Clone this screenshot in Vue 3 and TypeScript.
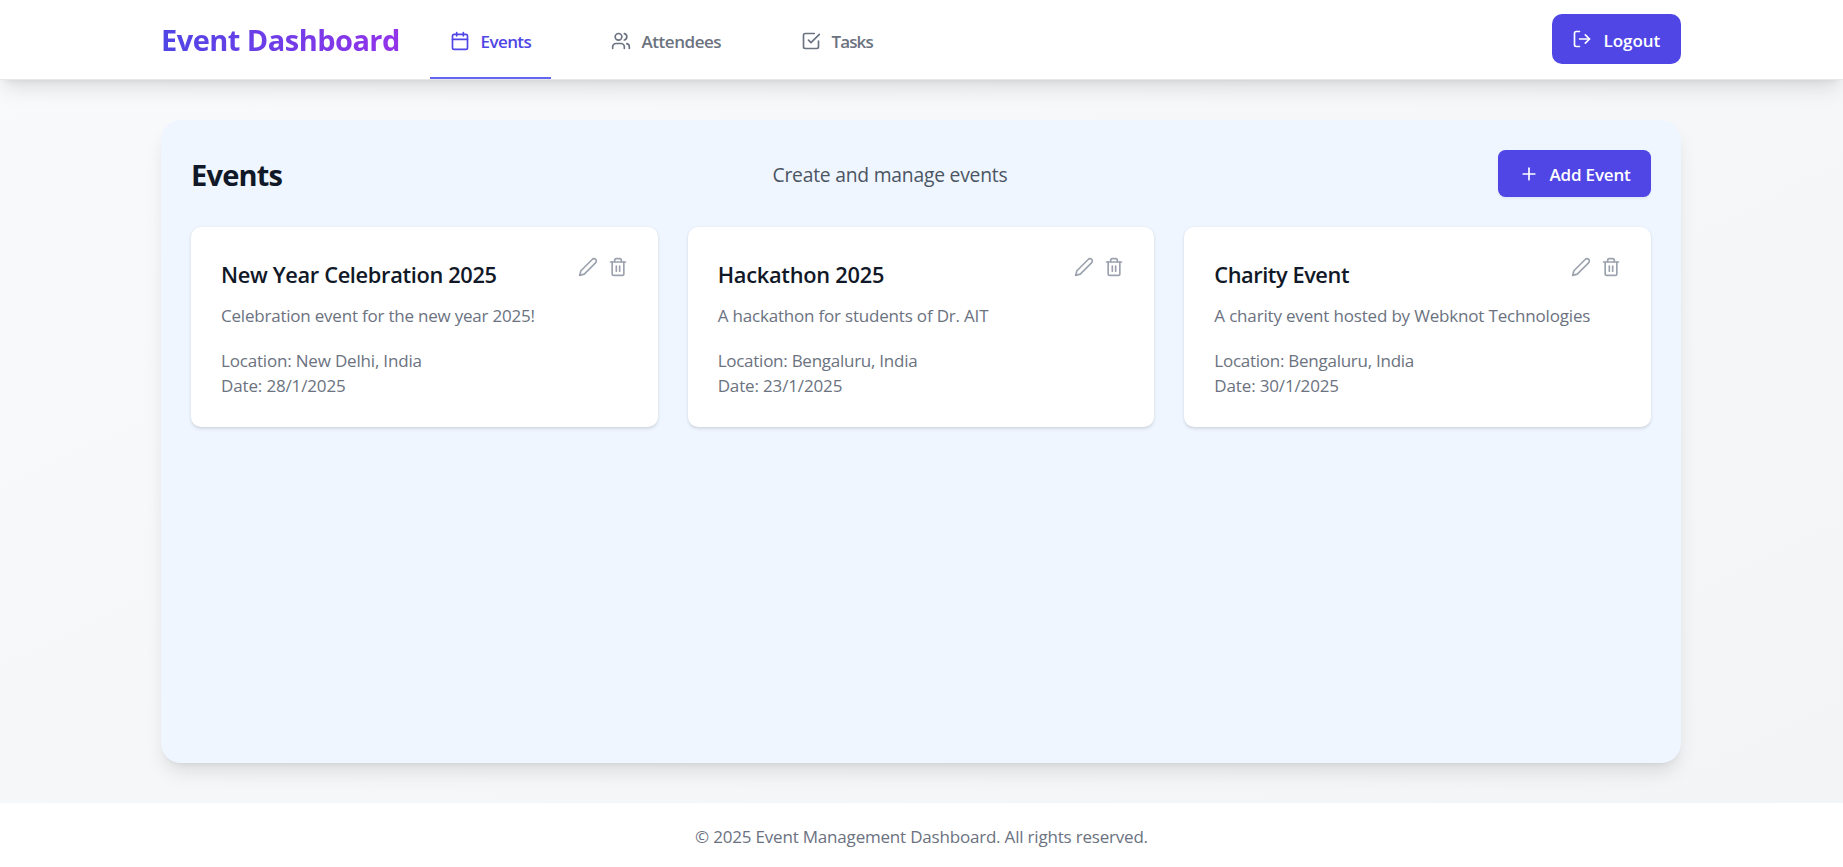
<script setup lang="ts">
type IconName = 'calendar' | 'users' | 'check' | 'logout' | 'plus' | 'pencil' | 'trash'

const icons: Record<IconName, string[]> = {
  calendar: ['M8 2v4', 'M16 2v4', 'M5 4h14a2 2 0 0 1 2 2v14a2 2 0 0 1-2 2H5a2 2 0 0 1-2-2V6a2 2 0 0 1 2-2z', 'M3 10h18'],
  users: ['M16 21v-2a4 4 0 0 0-4-4H6a4 4 0 0 0-4 4v2', 'M5 7a4 4 0 1 0 8 0a4 4 0 1 0-8 0', 'M22 21v-2a4 4 0 0 0-3-3.87', 'M16 3.13a4 4 0 0 1 0 7.75'],
  check: ['m9 11 3 3L22 4', 'M21 12v7a2 2 0 0 1-2 2H5a2 2 0 0 1-2-2V5a2 2 0 0 1 2-2h11'],
  logout: ['M9 21H5a2 2 0 0 1-2-2V5a2 2 0 0 1 2-2h4', 'm16 17 5-5-5-5', 'M21 12H9'],
  plus: ['M5 12h14', 'M12 5v14'],
  pencil: ['M17 3a2.85 2.83 0 1 1 4 4L7.5 20.5 2 22l1.5-5.5Z'],
  trash: ['M3 6h18', 'M19 6v14c0 1-1 2-2 2H7c-1 0-2-1-2-2V6', 'M8 6V4c0-1 1-2 2-2h4c1 0 2 1 2 2v2', 'M10 11v6', 'M14 11v6'],
}

interface Tab { label: string; icon: IconName; key: string }
const tabs: Tab[] = [
  { label: 'Events', icon: 'calendar', key: 'tab-events' },
  { label: 'Attendees', icon: 'users', key: 'tab-attendees' },
  { label: 'Tasks', icon: 'check', key: 'tab-tasks' },
]

interface EventItem { key: string; title: string; description: string; location: string; date: string }
const events: EventItem[] = [
  { key: 'celebration', title: 'New Year Celebration 2025', description: 'Celebration event for the new year 2025!', location: 'New Delhi, India', date: '28/1/2025' },
  { key: 'hackathon', title: 'Hackathon 2025', description: 'A hackathon for students of Dr. AIT', location: 'Bengaluru, India', date: '23/1/2025' },
  { key: 'charity', title: 'Charity Event', description: 'A charity event hosted by Webknot Technologies', location: 'Bengaluru, India', date: '30/1/2025' },
]
</script>

<template>
  <div class="page">
    <header class="header">
      <div class="container bar">
        <div class="brand">Event Dashboard</div>
        <nav class="tabs">
          <a v-for="(tab, i) in tabs" :key="tab.key" class="tab" :class="[tab.key, { active: i === 0 }]">
            <svg class="icon" viewBox="0 0 24 24"><path v-for="d in icons[tab.icon]" :key="d" :d="d" /></svg>
            <span>{{ tab.label }}</span>
          </a>
        </nav>
        <button class="btn logout" type="button">
          <svg class="icon" viewBox="0 0 24 24"><path v-for="d in icons.logout" :key="d" :d="d" /></svg>
          <span>Logout</span>
        </button>
      </div>
    </header>

    <main class="container main">
      <section class="panel">
        <div class="panel-head">
          <h1>Events</h1>
          <p class="subtitle">Create and manage events</p>
          <button class="btn add" type="button">
            <svg class="icon" viewBox="0 0 24 24"><path v-for="d in icons.plus" :key="d" :d="d" /></svg>
            <span>Add Event</span>
          </button>
        </div>
        <div class="cards">
          <article v-for="event in events" :key="event.key" class="card" :class="event.key">
            <div class="card-top">
              <h2>{{ event.title }}</h2>
              <div class="actions">
                <svg class="icon" viewBox="0 0 24 24"><path v-for="d in icons.pencil" :key="d" :d="d" /></svg>
                <svg class="icon" viewBox="0 0 24 24"><path v-for="d in icons.trash" :key="d" :d="d" /></svg>
              </div>
            </div>
            <p class="description">{{ event.description }}</p>
            <div class="meta">
              <p class="location">Location: {{ event.location }}</p>
              <p class="date">Date: {{ event.date }}</p>
            </div>
          </article>
        </div>
      </section>
    </main>

    <footer class="footer">© 2025 Event Management Dashboard. All rights reserved.</footer>
  </div>
</template>

<style>
body { margin: 0; }
</style>

<style scoped>
* { box-sizing: border-box; }
h1, h2, p { margin: 0; }

.page {
  display: flex;
  flex-direction: column;
  height: 867px;
  overflow: hidden;
  background: linear-gradient(to bottom right, #f9fafb, #f3f4f6);
  color: #111827;
  font: 400 17px/25px "Open Sans", "Noto Sans", sans-serif;
}
.container { width: 1520px; margin: 0 162px 0 161px; }
.icon {
  flex: none;
  width: 20px;
  height: 20px;
  fill: none;
  stroke: currentColor;
  stroke-width: 2;
  stroke-linecap: round;
  stroke-linejoin: round;
}

.header {
  flex: none;
  height: 80px;
  background: #fff;
  border-bottom: 1px solid #e5e7eb;
  box-shadow: 0 12.5px 18.75px -3.75px rgba(0, 0, 0, 0.1), 0 5px 7.5px -5px rgba(0, 0, 0, 0.1);
}
.bar { display: flex; height: 79px; }
.brand {
  width: 239px;
  padding-top: 20px;
  background: linear-gradient(to right, #4f46e5, #9333ea);
  -webkit-background-clip: text;
  background-clip: text;
  color: transparent;
  font-size: 29px;
  font-weight: 700;
  line-height: 40px;
  letter-spacing: -0.536px;
  white-space: nowrap;
}
.tabs { display: flex; gap: 40px; margin-left: 30px; }
.tab {
  display: flex;
  align-items: center;
  gap: 10.5px;
  padding: 5px 20px 0;
  border-bottom: 2px solid transparent;
  color: #6b7280;
  font-weight: 600;
}
.tab.active { border-bottom-color: #6366f1; color: #4f46e5; }
.tab-events { width: 121px; letter-spacing: -0.577px; }
.tab-attendees { width: 150px; letter-spacing: -0.45px; }
.tab-tasks { letter-spacing: -0.9px; }

.btn {
  display: flex;
  align-items: center;
  gap: 10px;
  padding: 0 0 0 20px;
  border: 0;
  background: #4f46e5;
  color: #fff;
  font: inherit;
  font-weight: 600;
  white-space: nowrap;
}
.logout { gap: 11.5px; width: 129px; height: 50px; margin: 14px 0 0 auto; border-radius: 10px; letter-spacing: -0.042px; }
.logout span { padding-top: 3px; }
.add {
  gap: 11px;
  width: 153px;
  height: 47px;
  padding-left: 20.5px;
  border-radius: 7.5px;
  box-shadow: 0 1.25px 2.5px rgba(0, 0, 0, 0.05);
  letter-spacing: -0.186px;
}
.add span { padding-top: 2px; }

.main { flex: 1; padding: 40px 0; }
.panel {
  height: 643px;
  padding: 30px;
  border-radius: 20px;
  background: #eff6ff;
  box-shadow: 0 12.5px 18.75px -3.75px rgba(0, 0, 0, 0.1), 0 5px 7.5px -5px rgba(0, 0, 0, 0.1);
}
.panel-head { display: flex; align-items: center; justify-content: space-between; height: 47px; }
h1 { width: 92px; padding-top: 2px; font-size: 29px; line-height: 40px; letter-spacing: -0.8px; }
.subtitle { width: 236px; padding-top: 2px; color: #4b5563; font-size: 19.3px; line-height: 30px; letter-spacing: -0.218px; white-space: nowrap; }

.cards { display: grid; grid-template-columns: repeat(3, 1fr); gap: 30px; margin-top: 30px; }
.card {
  height: 200px;
  padding: 30px;
  border-radius: 10px;
  background: #fff;
  box-shadow: 0 1.25px 3.75px rgba(0, 0, 0, 0.1), 0 1.25px 2.5px -1.25px rgba(0, 0, 0, 0.1);
  color: #6b7280;
}
.card-top { display: flex; justify-content: space-between; }
h2 { color: #111827; font-size: 21.8px; font-weight: 600; line-height: 35px; letter-spacing: -0.34px; }
.actions { display: flex; gap: 10px; color: #9ca3af; }
.description { margin-top: 11px; letter-spacing: -0.19px; white-space: nowrap; }
.meta { margin-top: 20px; }
.location { letter-spacing: -0.259px; }
.date { letter-spacing: -0.147px; }
.celebration .location { letter-spacing: -0.183px; }
.celebration .description { letter-spacing: -0.214px; }
.hackathon h2 { letter-spacing: -0.26px; }
.charity h2 { letter-spacing: -0.45px; }
.charity .description { letter-spacing: -0.175px; }

.footer {
  flex: none;
  position: relative;
  height: 64px;
  padding-top: 21px;
  background: #fff;
  color: #6b7280;
  letter-spacing: -0.198px;
  text-align: center;
}
</style>
